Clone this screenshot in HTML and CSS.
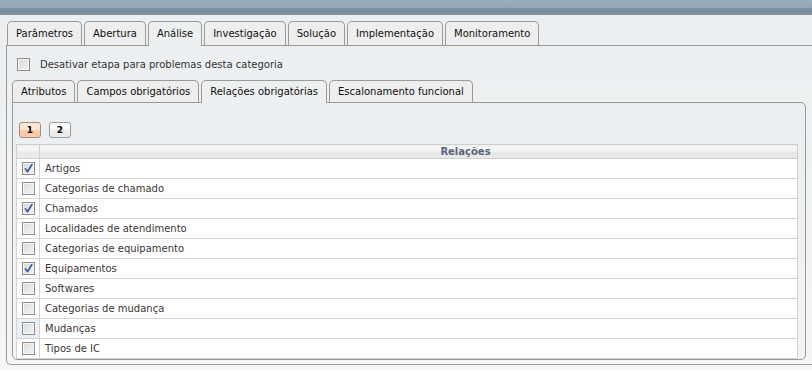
FILE: index.html
```html
<!DOCTYPE html>
<html lang="pt-BR">
<head>
    <meta charset="UTF-8">
    <title>Categoria de problema</title>
    <link rel="stylesheet" href="styles.css">
</head>
<body>
    <div class="topbar"></div>

    <div class="page">
        <!-- Etapas do problema -->
        <ul class="tabs outer-tabs">
            <li class="tab">Parâmetros</li>
            <li class="tab">Abertura</li>
            <li class="tab active">Análise</li>
            <li class="tab">Investigação</li>
            <li class="tab">Solução</li>
            <li class="tab">Implementação</li>
            <li class="tab">Monitoramento</li>
        </ul>

        <div class="outer-panel">
            <label class="disable-row">
                <span class="check"></span>
                Desativar etapa para problemas desta categoria
            </label>

            <ul class="tabs inner-tabs">
                <li class="tab">Atributos</li>
                <li class="tab">Campos obrigatórios</li>
                <li class="tab active">Relações obrigatórias</li>
                <li class="tab">Escalonamento funcional</li>
            </ul>

            <div class="inner-panel">
                <div class="pager">
                    <span class="page-btn current">1</span>
                    <span class="page-btn">2</span>
                </div>

                <table class="grid">
                    <thead>
                        <tr>
                            <th class="col-check"></th>
                            <th class="col-name">Relações</th>
                        </tr>
                    </thead>
                    <tbody id="rows"></tbody>
                </table>
            </div>
        </div>
    </div>

    <script>
        // Relações da etapa de análise
        var relations = [
            { name: "Artigos", checked: true },
            { name: "Categorias de chamado", checked: false },
            { name: "Chamados", checked: true },
            { name: "Localidades de atendimento", checked: false },
            { name: "Categorias de equipamento", checked: false },
            { name: "Equipamentos", checked: true },
            { name: "Softwares", checked: false },
            { name: "Categorias de mudança", checked: false },
            { name: "Mudanças", checked: false, hover: true },
            { name: "Tipos de IC", checked: false }
        ];

        var tick = '<svg width="11" height="11" viewBox="0 0 11 11"><path d="M2.5 6 L4.6 8.6 L8.8 1.6" fill="none" stroke="#3b57a8" stroke-width="1.8" stroke-linecap="round" stroke-linejoin="round"/></svg>';

        var html = "";
        relations.forEach(function(rel) {
            html += '<tr>'
                + '<td class="col-check' + (rel.hover ? ' hover' : '') + '">'
                + '<span class="check' + (rel.checked ? ' checked' : '') + '">' + (rel.checked ? tick : '') + '</span>'
                + '</td>'
                + '<td class="col-name">' + rel.name + '</td>'
                + '</tr>';
        });
        document.getElementById("rows").innerHTML = html;
    </script>
</body>
</html>
```

FILE: styles.css
```css
html, body {
    margin: 0;
    padding: 0;
    height: 100%;
    overflow: hidden;
}
body {
    font-family: "DejaVu Sans", Verdana, sans-serif;
    font-size: 10px;
    color: #222;
    background: linear-gradient(#ebeef0, #f4f5f5);
}
.topbar {
    height: 14px;
    background: linear-gradient(#9cadbd 0, #93a5b7 8px, #7b8fa4 8px, #7b8fa4 14px);
    border-bottom: 1px solid #8f959a;
}
.page {
    padding: 6px 0 0 6px;
}
.tabs {
    list-style-type: none;
    margin: 0;
    padding: 0;
    display: flex;
    gap: 2px;
    position: relative;
    z-index: 1;
}
.tab {
    padding: 0 8px;
    border: 1px solid #9a9a9a;
    border-bottom: none;
    border-radius: 5px 5px 0 0;
    background: #eeeeee;
    color: #111;
    white-space: nowrap;
}
.tab.active {
    background: #edf0f1;
    margin-bottom: -1px;
    padding-bottom: 1px;
}
.outer-tabs {
    padding-left: 1px;
}
.outer-tabs .tab {
    line-height: 23px;
}
.outer-panel {
    border-top: 1px solid #9a9a9a;
    border-left: 1px solid #9a9a9a;
    border-bottom: 1px solid #9a9a9a;
    border-bottom-left-radius: 5px;
    padding: 12px 6px 4px 5px;
}
.disable-row {
    display: flex;
    align-items: center;
    gap: 10px;
    padding-left: 5px;
    height: 12px;
    color: #333;
}
.inner-tabs {
    margin-top: 10px;
}
.inner-tabs .tab {
    line-height: 21px;
}
.inner-panel {
    border: 1px solid #9a9a9a;
    border-radius: 0 5px 5px 5px;
    background: linear-gradient(#ebeef0, #f3f4f5);
    padding: 19px 7px 0 3px;
}
.pager {
    display: flex;
    gap: 8px;
    padding-left: 3px;
    margin-bottom: 6px;
}
.page-btn {
    width: 20px;
    height: 14px;
    line-height: 14px;
    text-align: center;
    font-size: 9px;
    font-weight: bold;
    color: #000;
    border: 1px solid #9b9b9b;
    border-radius: 3px;
    background: linear-gradient(#fbfbfb 50%, #ececec 50%);
}
.page-btn.current {
    border-color: #a88a78;
    background: linear-gradient(#fde8d8 50%, #fbcaa6 50%);
}
.grid {
    width: 100%;
    border-collapse: collapse;
    background: #fff;
    border: 1px solid #cfcfcf;
}
.grid th {
    height: 13px;
    padding: 0;
    background: linear-gradient(#f3f4f4 50%, #e8e9ea 50%);
    border: 1px solid #cfcfcf;
    color: #5b6477;
    font-weight: bold;
    font-size: 10px;
    line-height: 13px;
}
.grid th.col-name {
    text-align: center;
    padding-left: 94px;
}
.grid td {
    height: 19px;
    padding: 0;
    border: 1px solid #d3d3d3;
    line-height: 12px;
}
.grid .col-check {
    width: 22px;
    text-align: center;
}
.grid td.hover {
    background: #eaf0f8;
}
.grid td.col-name {
    padding-left: 5px;
    color: #3d3535;
}
.check {
    display: inline-flex;
    align-items: center;
    justify-content: center;
    box-sizing: border-box;
    width: 13px;
    height: 13px;
    border: 1px solid #8d8d8d;
    background: linear-gradient(135deg, #d9d9d9, #f4f4f4);
    box-shadow: inset 0 0 0 1px #f6f6f6;
    vertical-align: middle;
}
```
